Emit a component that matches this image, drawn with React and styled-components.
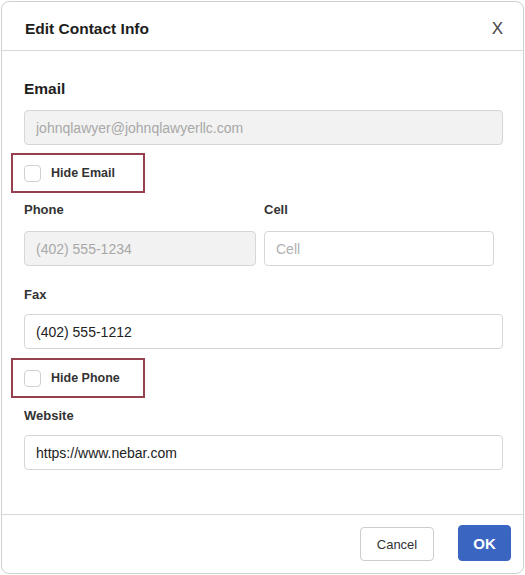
import React from "react";
import styled, { createGlobalStyle } from "styled-components";

const GlobalStyle = createGlobalStyle`
  body {
    margin: 0;
    background: #fff;
    font-family: "Liberation Sans", Arial, sans-serif;
  }
`;

const Dialog = styled.div`
  box-sizing: border-box;
  margin: 1px;
  width: 523px;
  height: 573px;
  border: 1px solid #cfcfcf;
  border-radius: 8px;
  display: flex;
  flex-direction: column;
  background: #fff;
`;

const Header = styled.div`
  box-sizing: border-box;
  height: 49px;
  border-bottom: 1px solid #d9d9d9;
  display: flex;
  align-items: center;
  justify-content: space-between;
  padding: 5px 20px 0 23px;
`;

const Title = styled.h1`
  margin: 0;
  font-size: 15.5px;
  font-weight: bold;
  color: #1e1e1e;
`;

const Close = styled.button`
  border: 0;
  background: none;
  padding: 0;
  font-family: inherit;
  font-size: 17px;
  color: #444;
  cursor: pointer;
`;

const Body = styled.div`
  flex: 1;
  padding: 29px 20px 0 22px;
`;

const Label = styled.label`
  display: block;
  font-size: ${p => (p.large ? "15.5px" : "13px")};
  font-weight: bold;
  line-height: 18px;
  color: ${p => (p.large ? "#1e1e1e" : "#333")};
  margin-bottom: ${p => p.gap || 10}px;
`;

const Input = styled.input`
  box-sizing: border-box;
  display: block;
  width: 100%;
  height: 35px;
  padding: 0 11px;
  border: 1px solid #d6d6d6;
  border-radius: 4px;
  font-family: inherit;
  font-size: 14px;
  color: #222;
  background: #fff;
  outline: none;
  &:disabled {
    background: #f2f2f2;
    color: #a8a8a8;
  }
  &::placeholder {
    color: #b0b0b0;
  }
`;

const Field = styled.div`
  margin-bottom: ${p => p.gap || 0}px;
`;

const Row = styled.div`
  display: grid;
  grid-template-columns: 232px 230px;
  gap: 8px;
  margin-bottom: ${p => p.gap || 0}px;
`;

const CheckRow = styled.label`
  box-sizing: border-box;
  display: flex;
  align-items: center;
  gap: 10px;
  width: 134px;
  height: 40px;
  margin: ${p => p.top}px 0 ${p => p.bottom}px -13px;
  padding-left: 11px;
  border: 2px solid #95404f;
  font-size: 12.5px;
  font-weight: bold;
  color: #333;
`;

const Box = styled.span`
  box-sizing: border-box;
  width: 17px;
  height: 17px;
  border: 1px solid #d0d0d0;
  border-radius: 4px;
  background: #fff;
`;

const Footer = styled.div`
  border-top: 1px solid #d9d9d9;
  height: 58px;
  display: flex;
  align-items: center;
  justify-content: flex-end;
  gap: 24px;
  padding: 0 12px 0 0;
`;

const Button = styled.button`
  box-sizing: border-box;
  height: ${p => (p.primary ? "36px" : "34px")};
  min-width: ${p => (p.primary ? "53px" : "74px")};
  padding: 0 14px;
  border-radius: 4px;
  border: 1px solid ${p => (p.primary ? "#3a65c1" : "#cdcdcd")};
  background: ${p => (p.primary ? "#3a65c1" : "#fff")};
  color: ${p => (p.primary ? "#fff" : "#333")};
  font-family: inherit;
  font-size: ${p => (p.primary ? "15px" : "13px")};
  font-weight: ${p => (p.primary ? "bold" : "normal")};
  margin-top: ${p => (p.primary ? "-2px" : "0")};
`;

export default function App() {
  return (
    <>
      <GlobalStyle />
      <Dialog>
        <Header>
          <Title>Edit Contact Info</Title>
          <Close>X</Close>
        </Header>
        <Body>
          <Field>
            <Label large gap={12}>Email</Label>
            <Input disabled value="johnqlawyer@johnqlawyerllc.com" readOnly />
          </Field>
          <CheckRow top={8} bottom={8}>
            <Box />
            Hide Email
          </CheckRow>
          <Row gap={20}>
            <Field>
              <Label gap={12}>Phone</Label>
              <Input disabled value="(402) 555-1234" readOnly />
            </Field>
            <Field>
              <Label gap={12}>Cell</Label>
              <Input placeholder="Cell" />
            </Field>
          </Row>
          <Field>
            <Label>Fax</Label>
            <Input defaultValue="(402) 555-1212" />
          </Field>
          <CheckRow top={9} bottom={9}>
            <Box />
            Hide Phone
          </CheckRow>
          <Field>
            <Label>Website</Label>
            <Input defaultValue="https://www.nebar.com" />
          </Field>
        </Body>
        <Footer>
          <Button>Cancel</Button>
          <Button primary>OK</Button>
        </Footer>
      </Dialog>
    </>
  );
}
